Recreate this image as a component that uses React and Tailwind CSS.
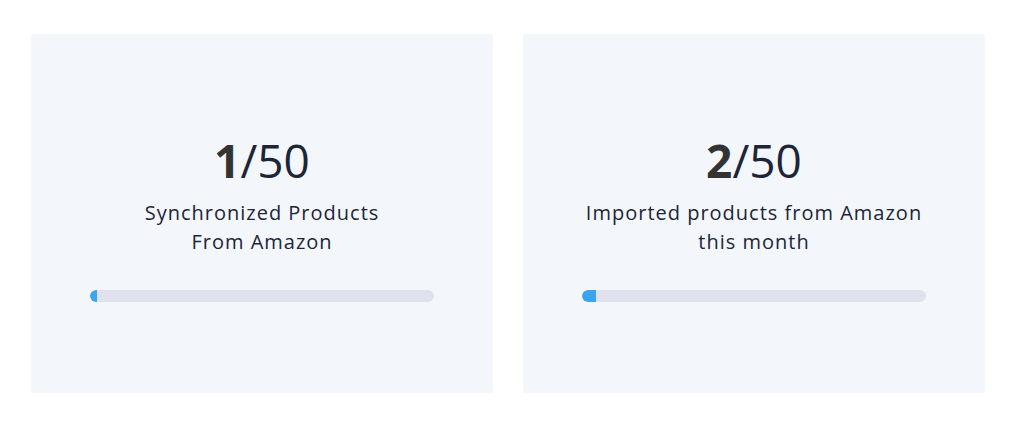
import React from 'react';

const stats = [
  { value: 1, total: 50, label: ['Synchronized Products', 'From Amazon'] },
  { value: 2, total: 50, label: ['Imported products from Amazon', 'this month'] },
];

function StatCard({ value, total, label }) {
  const pct = (value / total) * 100;
  return (
    <div className="flex h-[359px] flex-col items-center rounded-[3px] bg-[#f3f7fb] px-[59px] pt-[98px]">
      <div className="text-[46px] leading-[56px] text-[#1d2538]">
        <span className="font-bold text-[#333333]">{value}</span>/{total}
      </div>
      <div className="mt-[10px] text-center text-[20px] leading-[29px] tracking-[1px] text-[#1d2538]">
        {label[0]}
        <br />
        {label[1]}
      </div>
      <div className="mt-[34px] h-[12px] w-full overflow-hidden rounded-full bg-[#dfe2ec]">
        <div className="h-full rounded-l-full bg-[#3ba3f0]" style={{ width: `${pct}%` }} />
      </div>
    </div>
  );
}

export default function App() {
  return (
    <div className="min-h-[431px] bg-white pl-[31px] pr-[35px] pt-[34px] font-['Open_Sans',sans-serif]">
      <div className="grid grid-cols-2 gap-[30px]">
        {stats.map((s, i) => (
          <StatCard key={i} {...s} />
        ))}
      </div>
    </div>
  );
}
